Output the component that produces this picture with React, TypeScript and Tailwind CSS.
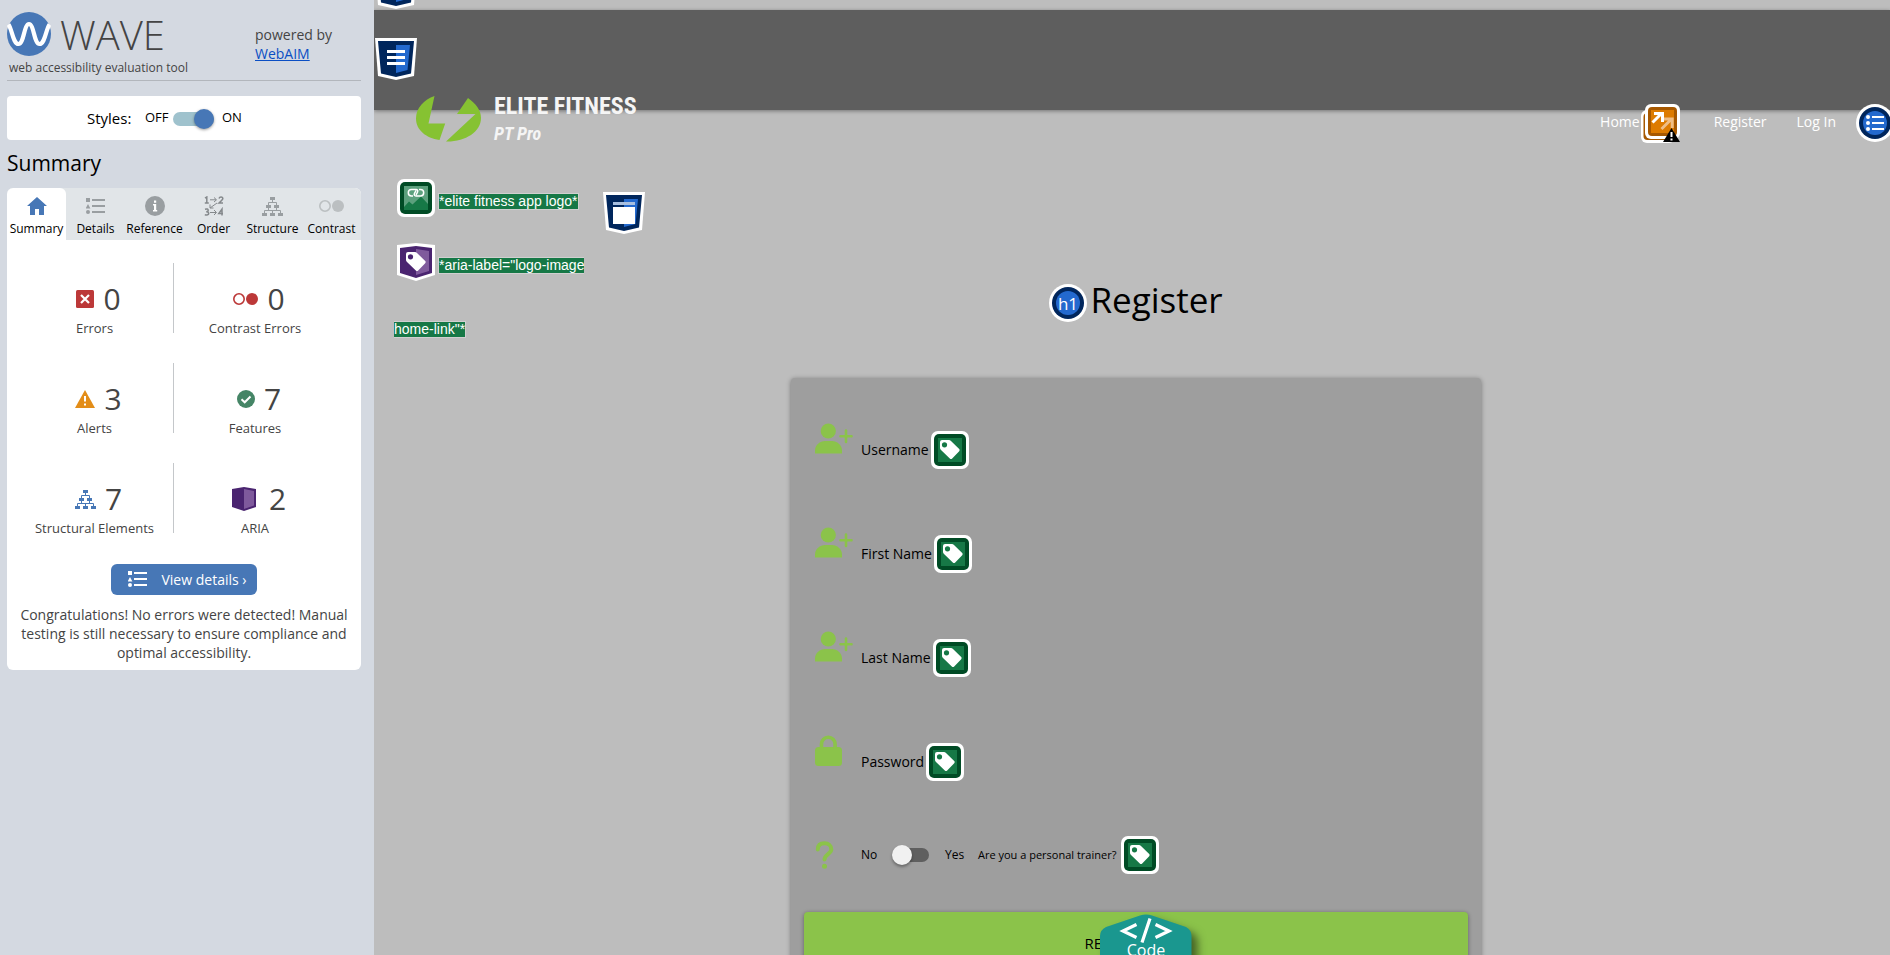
import type { ReactNode } from 'react'

const ListGlyph = ({ className }: { className: string }) => (
  <svg viewBox="0 0 20 17" className={className} fill="currentColor" aria-hidden="true">
    <path d="M0 0h4v4H0zM2 6l2.400 4.500H-.4zM6 1h13v2H6zM6 7h13v2H6zM6 13h13v2H6z" />
    <circle cx="2" cy="14" r="2" />
  </svg>
)

const TreeGlyph = ({ className }: { className: string }) => (
  <svg viewBox="0 0 21 19" className={className} fill="currentColor" aria-hidden="true">
    <path d="M8 0h5v3H8zM4 8h5v3H4zM12 8h5v3h-5zM0 16h5v3H0zM8 16h5v3H8zM16 16h5v3h-5z" />
    <path d="M10.500 3v2.500M6.500 8V5.500h8V8M6.500 11v2.500M14.500 11v2.500M2.500 16v-2.500h16V16M10.500 13.500V16" fill="none" stroke="currentColor" strokeWidth="1" />
  </svg>
)

const HomeGlyph = () => (
  <svg viewBox="0 0 20 18" className="h-[18px] w-5 text-[#4777b6]" fill="currentColor" aria-hidden="true">
    <path d="M10 0l10 9h-3v9h-5v-6H8v6H3V9H0z" />
  </svg>
)

const InfoGlyph = () => (
  <svg viewBox="0 0 20 20" className="h-5 w-5" aria-hidden="true">
    <circle cx="10" cy="10" r="10" fill="#999ea1" />
    <path d="M9 4.500h2.200v2.200H9zM8 8h3.200v6h1v1.500H8V14h1V9.500H8z" fill="#fff" />
  </svg>
)

const OrderGlyph = () => (
  <svg viewBox="0 0 20 20" className="h-5 w-5" fill="none" stroke="#85898c" strokeWidth="1.500" aria-hidden="true">
    <path d="M1 2.200L2.800 1v6.500M.800 7h4M15 2.500q.500-1.500 2-1.500 2 0 1.800 1.800Q18.500 4 15 7h4M1 13.200q3.200-.800 3.200 1 0 1.500-2 1.500 2.500 0 2.500 1.800 0 2-3.900 1.200M18 19.500V13l-3.200 4.500H19" />
    <path d="M6 3.800h6M10 1.500l2.500 2.300L10 6M6 16.500h6M10 14l2.500 2.500L10 19M13 7L6 12M6 8.500V12h3.500" strokeWidth="1" />
  </svg>
)

const PairGlyph = ({ className }: { className: string }) => (
  <svg viewBox="0 0 25 12" className={className} aria-hidden="true">
    <circle cx="6" cy="6" r="5.200" fill="none" stroke="currentColor" strokeWidth="1.600" />
    <circle cx="19" cy="6" r="6" fill="currentColor" />
  </svg>
)

const ErrorGlyph = () => (
  <svg viewBox="0 0 18 18" className="h-[18px] w-[18px]" aria-hidden="true">
    <rect width="18" height="18" rx="1.500" fill="#bc3838" />
    <path d="M5 5l8 8M13 5l-8 8" stroke="#fff" strokeWidth="2.200" />
  </svg>
)

const AlertGlyph = () => (
  <svg viewBox="0 0 20 18" className="h-[18px] w-5" aria-hidden="true">
    <path d="M10 0l10 18H0z" fill="#e38d18" />
    <path d="M9 6h2v5.500H9zM9 13.500h2v2H9z" fill="#fff" />
  </svg>
)

const FeatureGlyph = () => (
  <svg viewBox="0 0 18 18" className="h-[18px] w-[18px]" aria-hidden="true">
    <circle cx="9" cy="9" r="9" fill="#458566" />
    <path d="M4.500 9.300l3.200 3 5.800-5.800" fill="none" stroke="#fff" strokeWidth="2" />
  </svg>
)

const AriaGlyph = () => (
  <svg viewBox="0 0 24 24" className="mr-1 h-6 w-6" aria-hidden="true">
    <path d="M0 2l12-2 12 2v18l-12 4-12-4z" fill="#4a2470" />
    <path d="M12 2l10 2v14.500L12 22z" fill="#7f5a9c" />
  </svg>
)

const TagShape = ({ hole }: { hole: string }) => (
  <>
    <path d="M9 11q0-2 2-2h7q1 0 2 1l8.200 8q1 1 0 2.200l-7 7.300q-1.200 1-2.400 0L10 19q-1-1-1-2z" fill="#fff" />
    <circle cx="13.500" cy="13.800" r="2.600" fill={hole} />
  </>
)

const LabelBadge = () => (
  <svg viewBox="0 0 38 38" className="h-[38px] w-[38px] shrink-0" aria-hidden="true">
    <rect width="38" height="38" rx="7" fill="#fff" />
    <rect x="3" y="3" width="32" height="32" rx="5" fill="#004b25" />
    <rect x="7" y="7" width="24" height="24" fill="#167846" />
    <TagShape hole="#167846" />
  </svg>
)

const LinkedImageBadge = () => (
  <svg viewBox="0 0 38 38" className="h-[38px] w-[38px] shrink-0" aria-hidden="true">
    <rect width="38" height="38" rx="7" fill="#fff" />
    <rect x="3" y="3" width="32" height="32" rx="5" fill="#004b25" />
    <rect x="7" y="7" width="24" height="24" fill="#5ca07d" />
    <path d="M7 28l5-5.500 3.500 3L24 17.500l7 7.500v6H7z" fill="#167846" />
    <path d="M16 17h-1.500a3.200 3.200 0 010-6.400H19q2.500.200 1.500 2.600L19 16M22 10.600h1.500a3.200 3.200 0 010 6.400H19q-2.500-.200-1.500-2.600L19 11.500" fill="none" stroke="#fff" strokeWidth="1.500" />
  </svg>
)

const AriaLabelBadge = () => (
  <svg viewBox="0 0 38 38" className="h-[38px] w-[38px] shrink-0" aria-hidden="true">
    <path d="M0 2l19-2 19 2v30l-19 6-19-6z" fill="#fff" />
    <path d="M3 5l16-2 16 2v25l-16 5-16-5z" fill="#4a2470" />
    <path d="M19 6l13 2v20l-13 4z" fill="#7f5a9c" />
    <TagShape hole="#4a2470" />
  </svg>
)

const LandmarkBadge = ({ children, className = '' }: { children?: ReactNode; className?: string }) => (
  <svg viewBox="0 0 42 42" className={`h-[42px] w-[42px] shrink-0 ${className}`} aria-hidden="true">
    <path d="M0 0h42l-3 38-18 4-18-4z" fill="#fff" />
    <path d="M3 3h36l-3 32.500L21 39 6 35.500z" fill="#00265c" />
    <path d="M21 7h14l-2.500 25L21 35z" fill="#2369ce" />
    {children}
  </svg>
)

const RedundantLinkBadge = () => (
  <svg viewBox="0 0 39 39" className="h-[39px] w-[39px] shrink-0" aria-hidden="true">
    <rect y="6" width="34" height="33" rx="6" fill="#fff" />
    <rect x="2.500" y="9" width="29" height="27" rx="4" fill="#a65800" />
    <rect x="4" width="35" height="35" rx="6" fill="#fff" />
    <rect x="7" y="3" width="29" height="29" rx="4" fill="#a65800" />
    <rect x="10" y="6" width="23" height="23" fill="#dd7b00" />
    <path d="M20.500 25L30 15.500M22 15h9.200v9" fill="none" stroke="#efbe85" strokeWidth="3" />
    <path d="M11.500 18.500L21 9M13 9.500h8.500v8.500" fill="none" stroke="#fff" strokeWidth="3" />
    <path d="M30.500 24L39 38H22z" fill="#000" />
    <path d="M29.500 28h2v5h-2zM29.500 34.500h2v2h-2z" fill="#fff" />
  </svg>
)

const ListBadge = () => (
  <svg viewBox="0 0 38 38" className="h-[38px] w-[38px] shrink-0" aria-hidden="true">
    <circle cx="19" cy="19" r="19" fill="#fff" />
    <circle cx="19" cy="19" r="16" fill="#00265c" />
    <circle cx="19" cy="19" r="12" fill="#2369ce" />
    <circle cx="12" cy="13" r="2" fill="#fff" />
    <circle cx="12" cy="19" r="2" fill="#fff" />
    <circle cx="12" cy="25" r="2" fill="#fff" />
    <path d="M16 12h12v2H16zM16 18h12v2H16zM16 24h12v2H16z" fill="#fff" />
  </svg>
)

const PersonAddGlyph = () => (
  <svg viewBox="0 0 38 31" className="h-[31px] w-[38px]" fill="#8bc34a" aria-hidden="true">
    <circle cx="13.300" cy="8" r="7.600" />
    <path d="M0 30.500v-3C0 22 5 18 10 18h7c5 0 10 4 10 9.500v3z" />
    <path d="M31 7.500v11.500M25.500 13.300h11" stroke="#8bc34a" strokeWidth="2.600" strokeLinecap="round" />
  </svg>
)

const LockGlyph = () => (
  <svg viewBox="0 0 38 31" className="h-[31px] w-[38px]" fill="#8bc34a" aria-hidden="true">
    <rect y="12" width="27" height="19" rx="3.500" />
    <path d="M6.500 14V9a6.800 6.800 0 0113.600 0v5" fill="none" stroke="#8bc34a" strokeWidth="3.600" />
  </svg>
)

const QuestionGlyph = () => (
  <svg viewBox="0 0 38 28" className="h-7 w-[38px]" aria-hidden="true">
    <path d="M2.800 8.500C2.800 4 5.500 2.200 9.500 2.200s6.800 2.500 6.800 6c0 4.800-6.800 5-6.800 10.300" fill="none" stroke="#8bc34a" strokeWidth="4" strokeLinecap="round" />
    <circle cx="9.500" cy="25.300" r="2.500" fill="#8bc34a" />
  </svg>
)

const WaveMark = () => (
  <svg viewBox="0 0 44 44" className="h-11 w-11" aria-hidden="true">
    <circle cx="22" cy="22" r="22" fill="#4777b6" />
    <path d="M1.500 12.500C5 17 6 32 11.500 32S17 12 22 12s5 20 10.500 20S39 17 42.500 12.500" fill="none" stroke="#fff" strokeWidth="4.200" />
  </svg>
)

const tabs = [
  { label: 'Summary', icon: <HomeGlyph /> },
  { label: 'Details', icon: <ListGlyph className="h-[17px] w-5 text-[#999ea1]" /> },
  { label: 'Reference', icon: <InfoGlyph /> },
  { label: 'Order', icon: <OrderGlyph /> },
  { label: 'Structure', icon: <TreeGlyph className="h-[19px] w-[21px] text-[#999ea1]" /> },
  { label: 'Contrast', icon: <PairGlyph className="h-3 w-[25px] text-[#bbbfc1]" /> },
]

const stats = [
  { label: 'Errors', count: 0, icon: <ErrorGlyph /> },
  { label: 'Contrast Errors', count: 0, icon: <PairGlyph className="h-3 w-[25px] text-[#bc3838]" /> },
  { label: 'Alerts', count: 3, icon: <AlertGlyph /> },
  { label: 'Features', count: 7, icon: <FeatureGlyph /> },
  { label: 'Structural Elements', count: 7, icon: <TreeGlyph className="h-[19px] w-[21px] text-[#4777b6]" /> },
  { label: 'ARIA', count: 2, icon: <AriaGlyph /> },
]

function Sidebar() {
  return (
    <aside className="w-[374px] shrink-0 bg-[#d4d9e1] pr-[13px] pl-[7px] text-[#444]">
      <header className="flex h-[81px] justify-between border-b border-[#b2b6bc] pt-3">
        <div>
          <div className="flex h-11 items-center gap-[9px]">
            <WaveMark />
            <span className="pt-[2px] text-[40px] leading-[44px] font-light">WAVE</span>
          </div>
          <p className="px-[2px] text-[12px] leading-6">web accessibility evaluation tool</p>
        </div>
        <p className="w-[106px] pt-[13px] text-[14px] leading-[19px]">
          powered by
          <br />
          <a href="#webaim" className="text-[#0b4fc4] underline">WebAIM</a>
        </p>
      </header>

      <div className="mt-[15px] flex h-11 items-center rounded bg-white pl-20 text-black">
        <span className="w-[58px] text-[15px]">Styles:</span>
        <label className="flex items-center text-[13px]">
          <span className="w-7">OFF</span>
          <input
            type="checkbox"
            role="switch"
            defaultChecked
            className="relative mt-[2px] h-[14px] w-[41px] appearance-none rounded-full bg-[#9fc2cd] before:absolute before:-top-[3px] before:right-0 before:h-5 before:w-5 before:rounded-full before:bg-[#4777b6] before:shadow-[0_1px_3px_rgba(0,0,0,0.4)]"
          />
          <span className="pl-2">ON</span>
        </label>
      </div>

      <h2 className="mt-2 mb-[10px] text-[21px] leading-[30px] text-black">Summary</h2>

      <section className="overflow-hidden rounded-md bg-white">
        <div role="tablist" className="grid h-[52px] grid-cols-6 bg-[#e1e5e8]">
          {tabs.map((tab, i) => (
            <button
              key={tab.label}
              type="button"
              role="tab"
              aria-selected={i === 0}
              className="flex flex-col items-center pt-2 text-[12px] leading-[18px] text-black aria-selected:rounded-t-md aria-selected:bg-white"
            >
              <span className="flex h-5 items-center justify-center">{tab.icon}</span>
              <span className="pt-1">{tab.label}</span>
            </button>
          ))}
        </div>

        <ul className="ml-[7px] grid w-80 grid-cols-2 gap-y-[30px] pt-[23px] text-center">
          {stats.map((stat) => (
            <li key={stat.label} className="h-[70px] border-[#c4c7ca] pt-3 pl-[2px] odd:border-r">
              <div className="flex h-12 items-center justify-center gap-[9px] pl-2">
                {stat.icon}
                <span className="text-[30px] leading-[48px]">{stat.count}</span>
              </div>
              <p className="text-[13px] leading-[10px]">{stat.label}</p>
            </li>
          ))}
        </ul>

        <div className="px-2 pt-[31px] pb-2 text-center text-[14px] leading-[19px]">
          <button type="button" className="inline-flex h-[31px] items-center gap-[13px] rounded-md bg-[#4777b6] pr-[10px] pl-[17px] text-white">
            <ListGlyph className="h-[17px] w-5" />
            View details ›
          </button>
          <p className="mt-[10px]">
            Congratulations! No errors were detected! Manual testing is still necessary to ensure compliance and optimal accessibility.
          </p>
        </div>
      </section>
    </aside>
  )
}

function SiteHeader() {
  return (
    <header className="flex h-[100px] justify-between bg-[#5e5e5e] shadow-[0_1px_4px_rgba(0,0,0,0.4)]">
      <div className="flex">
        <div className="w-5">
          <LandmarkBadge className="mt-7 ml-px">
            <path d="M12 12h18v3H12zM12 18h18v3H12zM12 24h18v3H12z" fill="#fff" />
          </LandmarkBadge>
        </div>
        <div className="pt-[86px]">
          <div className="flex h-[46px] gap-[13px] pl-[22px]">
            <svg viewBox="0 0 65 46" className="h-[46px] w-[65px]" fill="#86c232" aria-hidden="true">
              <path d="M18.500 0L12.500 27.500h16.700L23.500 44C10 42 0 34 0 22.500 0 12 8 3.500 18.500 0zM52 2C60 8 65 14 65 22 65 36 49 46 30 45.500L59.500 18H41z" />
            </svg>
            <div className="-mt-1 font-['Liberation_Sans_Narrow','Roboto_Condensed',Roboto,sans-serif] font-bold text-[#f5f5f5]">
              <p className="text-[24px] leading-7">ELITE FITNESS</p>
              <p className="text-[18px] leading-7 italic">PT Pro</p>
            </div>
          </div>
          <div className="flex items-start pt-6 font-['Liberation_Sans',Arial,sans-serif] text-[14px] leading-[15px] text-white">
            <div className="w-[209px]">
              <div className="flex h-16 items-center gap-[3px] pl-[3px]">
                <LinkedImageBadge />
                <span className="mt-[6px] border border-[#d0d0d0] bg-[#167846]">*elite fitness app logo*</span>
              </div>
              <div className="flex h-16 items-center gap-[3px] pl-[3px]">
                <AriaLabelBadge />
                <span className="mt-[6px] border border-r-0 border-[#d0d0d0] bg-[#167846]">*aria-label="logo-image</span>
              </div>
              <div className="flex h-16 items-center">
                <span className="mt-[6px] border border-l-0 border-[#d0d0d0] bg-[#167846]">home-link"*</span>
              </div>
            </div>
            <LandmarkBadge className="mt-[26px]">
              <path d="M10 10h22v3H10z" fill="#a8bfdf" />
              <path d="M10 15h22v17H10z" fill="#fff" />
            </LandmarkBadge>
          </div>
        </div>
      </div>
      <nav className="mt-[94px] -mr-1 flex h-[38px] items-center text-[14px] text-white">
        <a href="#home" className="pb-[3px]">Home</a>
        <span className="mr-[34px] ml-px"><RedundantLinkBadge /></span>
        <a href="#register" className="mr-[30px] pb-[3px]">Register</a>
        <a href="#login" className="mr-5 pb-[3px]">Log In</a>
        <ListBadge />
      </nav>
    </header>
  )
}

const fields = [
  { id: 'username', label: 'Username', type: 'text', icon: <PersonAddGlyph /> },
  { id: 'first-name', label: 'First Name', type: 'text', icon: <PersonAddGlyph /> },
  { id: 'last-name', label: 'Last Name', type: 'text', icon: <PersonAddGlyph /> },
  { id: 'password', label: 'Password', type: 'password', icon: <LockGlyph /> },
]

function RegisterForm() {
  return (
    <form className="mx-auto w-[690px] max-w-full rounded-sm bg-[#9e9e9e] px-[13px] pt-5 pb-10 text-black shadow-[0_1px_5px_rgba(0,0,0,0.4)]">
      {fields.map((field) => (
        <div key={field.id} className="flex h-[104px] items-center pl-[11px] text-[14px]">
          <span className="w-[46px] pb-6">{field.icon}</span>
          <label htmlFor={field.id} className="mr-[2px] pb-px">{field.label}</label>
          <LabelBadge />
          <input id={field.id} type={field.type} className="h-10 min-w-0 flex-1 bg-transparent outline-none" />
        </div>
      ))}
      <div className="flex h-[82px] items-center pl-[11px] text-[12px]">
        <span className="w-[46px]"><QuestionGlyph /></span>
        <label htmlFor="trainer" className="w-8">No</label>
        <input
          id="trainer"
          type="checkbox"
          role="switch"
          className="relative h-[14px] w-9 appearance-none rounded-full bg-[#5f5f5f] before:absolute before:-top-[3px] before:-left-px before:h-5 before:w-5 before:rounded-full before:bg-[#f1f1f1] before:shadow-[0_2px_3px_rgba(0,0,0,0.35)]"
        />
        <label htmlFor="trainer" className="flex items-center">
          <span className="ml-4 w-[33px]">Yes</span>
          <span className="mr-[5px] text-[11px]">Are you a personal trainer?</span>
          <LabelBadge />
        </label>
      </div>
      <button type="submit" className="mt-4 h-[62px] w-full rounded-sm bg-[#8bc34a] pr-9 text-[15px] uppercase shadow-[0_1px_4px_rgba(0,0,0,0.4)]">
        Register
      </button>
    </form>
  )
}

export default function App() {
  return (
    <div className="flex h-screen overflow-hidden font-['Open_Sans','Noto_Sans',sans-serif]">
      <Sidebar />
      <div className="relative min-w-0 flex-1 overflow-hidden bg-[#bdbdbd]">
        <div className="h-[10px]">
          <LandmarkBadge className="absolute -top-[33px] left-px" />
        </div>
        <SiteHeader />
        <main className="pt-[165px] pl-2">
          <h1 className="mb-[53px] flex h-[50px] items-center justify-center gap-[3px] text-[35px] text-black">
            <svg viewBox="0 0 38 38" className="mt-[6px] h-[38px] w-[38px]" aria-hidden="true">
              <circle cx="19" cy="19" r="19" fill="#fff" />
              <circle cx="19" cy="19" r="16" fill="#00265c" />
              <circle cx="19" cy="19" r="12" fill="#2369ce" />
              <text x="19" y="25.500" textAnchor="middle" fontSize="17" fill="#fff">h1</text>
            </svg>
            Register
          </h1>
          <RegisterForm />
        </main>
        <button type="button" className="absolute bottom-0 left-1/2 -ml-8 h-[41px] w-[92px] text-white">
          <svg viewBox="0 0 92 41" className="absolute inset-0 h-[41px] w-[92px] overflow-visible drop-shadow-[6px_6px_4px_rgba(0,0,0,0.5)]" aria-hidden="true">
            <path d="M0 60V22q0-6 6-9L40 1.500q6-2 12 0L86 13q5.500 3 5.500 9v38z" fill="#1a978f" />
            <path d="M36.500 10.500L23 17l13.500 6.500M55.500 10.500L69 17l-13.500 6.500M50 4.500l-8 24" fill="none" stroke="#fff" strokeWidth="3.200" />
          </svg>
          <span className="relative block pt-[27px] text-[16px] leading-[18px]">Code</span>
        </button>
      </div>
    </div>
  )
}
